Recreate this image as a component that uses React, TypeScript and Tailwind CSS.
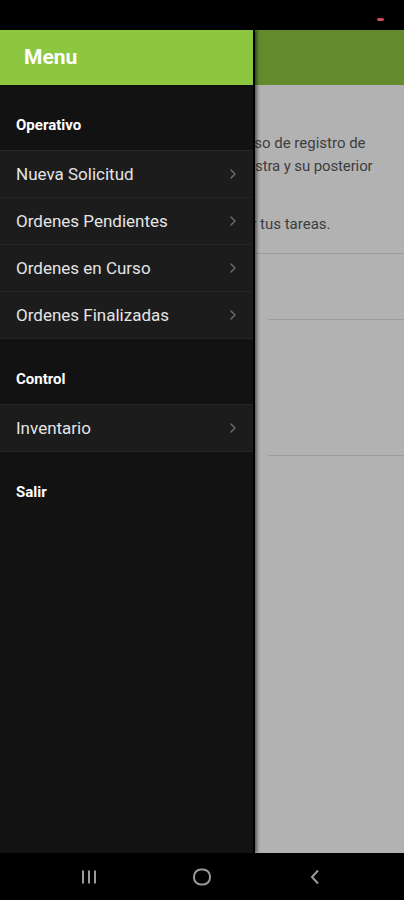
import { ChevronRight } from "lucide-react";

const operativo = [
  "Nueva Solicitud",
  "Ordenes Pendientes",
  "Ordenes en Curso",
  "Ordenes Finalizadas",
];

function SectionLabel({ label }: { label: string }) {
  return (
    <div className="h-[65px] bg-[#121212] px-4 pt-[28px]">
      <span className="text-[15px] font-bold leading-[18px] text-white">{label}</span>
    </div>
  );
}

function MenuRow({ label }: { label: string }) {
  return (
    <div className="flex h-[47px] items-center justify-between border-t border-[#262626] bg-[#1c1c1c] pl-4 pr-[12px]">
      <span className="text-[17px] leading-5 text-[#e4e4e4]">{label}</span>
      <ChevronRight size={16} strokeWidth={2} className="text-[#6f6f6f]" />
    </div>
  );
}

export default function App() {
  return (
    <div
      className="flex h-[900px] w-[404px] flex-col overflow-hidden bg-black"
      style={{ fontFamily: "Roboto, 'Noto Sans', sans-serif" }}
    >
      {/* status bar */}
      <div className="relative h-[30px] shrink-0 bg-black">
        <div className="absolute left-[377px] top-[18px] h-[3px] w-[7px] rounded-sm bg-[#c4505c]" />
      </div>

      <div className="relative flex-1 overflow-hidden">
        {/* page under the drawer */}
        <div className="flex h-full flex-col bg-white">
          <div className="h-[55px] shrink-0 bg-[#8fc843]" />
          <div className="whitespace-nowrap px-4 pt-[47px] text-[15px] leading-[23px] text-[#5a5a5a]">
            <p>Esta app te permite agilizar el proceso de registro de</p>
            <p className="tracking-[-0.12px]">el seguimiento de toda toma de muestra y su posterior</p>
            <p>análisis en laboratorio.</p>
            <p className="mt-[12px]">Usa el menú lateral para administrar tus tareas.</p>
          </div>
          <div className="mt-[17px] border-t border-[#e0e0e0]" />
          <div className="ml-[268px] mt-[65px] border-t border-[#e0e0e0]" />
          <div className="ml-[268px] mt-[135px] border-t border-[#e0e0e0]" />
        </div>
        <div className="absolute inset-0 bg-black/30" />

        {/* drawer */}
        <div className="absolute bottom-0 left-0 top-0 flex w-[255px] flex-col border-r-2 border-black bg-[#121212] shadow-[2px_0_3px_rgba(0,0,0,0.5)]">
          <div className="flex h-[55px] shrink-0 items-center bg-[#8dc63f] px-6">
            <span className="text-[21px] font-bold text-white">Menu</span>
          </div>
          <SectionLabel label="Operativo" />
          {operativo.map((item) => (
            <MenuRow key={item} label={item} />
          ))}
          <div className="border-t border-[#262626]" />
          <SectionLabel label="Control" />
          <MenuRow label="Inventario" />
          <div className="border-t border-[#262626]" />
          <SectionLabel label="Salir" />
        </div>
      </div>

      {/* navigation bar */}
      <div className="flex h-[47px] shrink-0 items-center gap-[73px] bg-black pl-[69px]">
        <div className="flex w-[40px] justify-center">
          <svg width="16" height="16" viewBox="0 0 16 16" className="text-[#9a9a9a]">
            <path d="M2 1.5v13M8 1.5v13M14 1.5v13" stroke="currentColor" strokeWidth="2" />
          </svg>
        </div>
        <div className="flex w-[40px] justify-center">
          <svg width="20" height="20" viewBox="0 0 20 20" className="text-[#9a9a9a]">
            <rect x="2" y="2.5" width="16" height="15" rx="7" fill="none" stroke="currentColor" strokeWidth="2" />
          </svg>
        </div>
        <div className="flex w-[40px] justify-center">
          <svg width="12" height="18" viewBox="0 0 12 18" className="text-[#9a9a9a]">
            <path d="M9 2.5L3 9l6 6.5" fill="none" stroke="currentColor" strokeWidth="2" />
          </svg>
        </div>
      </div>
    </div>
  );
}
